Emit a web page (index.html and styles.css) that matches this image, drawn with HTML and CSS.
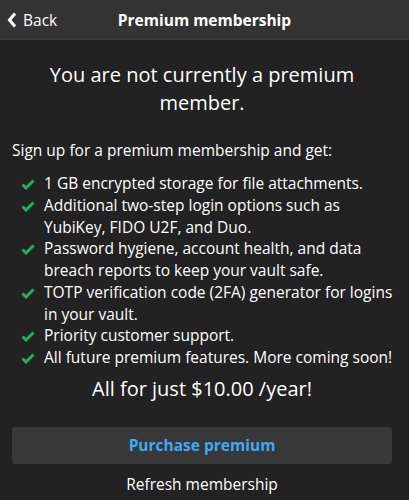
FILE: index.html
```html
<!DOCTYPE html>
<html>
<head>
<meta charset="utf-8">
<link rel="stylesheet" href="styles.css">
</head>
<body>
<header class="topbar">
  <a class="back"><svg class="chev" viewBox="0 0 10 16" width="10" height="16"><path d="M8 1.5 L2.5 8 L8 14.5" fill="none" stroke="#fff" stroke-width="3" stroke-linejoin="miter"/></svg><span>Back</span></a>
  <h1 class="title">Premium membership</h1>
</header>
<main class="content">
  <p class="lead">You are not currently a premium member.</p>
  <p class="intro">Sign up for a premium membership and get:</p>
  <ul class="features">
    <li><svg class="check" viewBox="0 0 14 11" width="14" height="11"><path d="M1.5 5.5 L5 9 L12.5 1.5" fill="none" stroke="#1fae62" stroke-width="3"/></svg><span>1 GB encrypted storage for file attachments.</span></li>
    <li><svg class="check" viewBox="0 0 14 11" width="14" height="11"><path d="M1.5 5.5 L5 9 L12.5 1.5" fill="none" stroke="#1fae62" stroke-width="3"/></svg><span>Additional two-step login options such as YubiKey, FIDO U2F, and Duo.</span></li>
    <li><svg class="check" viewBox="0 0 14 11" width="14" height="11"><path d="M1.5 5.5 L5 9 L12.5 1.5" fill="none" stroke="#1fae62" stroke-width="3"/></svg><span>Password hygiene, account health, and data breach reports to keep your vault safe.</span></li>
    <li><svg class="check" viewBox="0 0 14 11" width="14" height="11"><path d="M1.5 5.5 L5 9 L12.5 1.5" fill="none" stroke="#1fae62" stroke-width="3"/></svg><span>TOTP verification code (2FA) generator for logins in your vault.</span></li>
    <li><svg class="check" viewBox="0 0 14 11" width="14" height="11"><path d="M1.5 5.5 L5 9 L12.5 1.5" fill="none" stroke="#1fae62" stroke-width="3"/></svg><span>Priority customer support.</span></li>
    <li><svg class="check" viewBox="0 0 14 11" width="14" height="11"><path d="M1.5 5.5 L5 9 L12.5 1.5" fill="none" stroke="#1fae62" stroke-width="3"/></svg><span>All future premium features. More coming soon!</span></li>
  </ul>
  <p class="price">All for just $10.00 /year!</p>
  <button class="purchase">Purchase premium</button>
  <button class="refresh">Refresh membership</button>
</main>
</body>
</html>
```
FILE: styles.css
```css
* { box-sizing: border-box; }
html, body { margin: 0; padding: 0; }
body {
  background: #222222;
  color: #ffffff;
  font-family: "Open Sans", "Noto Sans", sans-serif;
  width: 409px;
  height: 500px;
  overflow: hidden;
}
.topbar {
  height: 40px;
  background: #333333;
  border-bottom: 1px solid #3a3a3a;
  display: flex;
  align-items: center;
  position: relative;
}
.back {
  display: flex;
  align-items: center;
  gap: 6px;
  padding-left: 7px;
  font-size: 15.5px;
  color: #fff;
}
.chev { display: block; }
.title {
  position: absolute;
  left: 0;
  right: 0;
  text-align: center;
  margin: 0;
  font-size: 15.5px;
  font-weight: 700;
  pointer-events: none;
}
.content {
  padding: 0 17px 0 12px;
}
.lead {
  margin: 21px 20px 0;
  text-align: center;
  font-size: 20px;
  line-height: 28px;
}
.intro {
  margin: 22px 0 0;
  font-size: 15.5px;
  line-height: 22px;
}
.features {
  list-style: none;
  margin: 12px -12px 0 0;
  padding: 0 0 0 9px;
  font-size: 15.5px;
  line-height: 21.75px;
}
.features li {
  display: flex;
  gap: 9px;
}
.check {
  flex: none;
  margin-top: 6px;
}
.price {
  margin: 6px 0 0;
  text-align: center;
  font-size: 20px;
  line-height: 28px;
}
.purchase {
  display: block;
  width: 100%;
  margin-top: 24px;
  height: 37px;
  background: #383838;
  border: none;
  border-radius: 3px;
  color: #3fa9f5;
  font-family: inherit;
  font-size: 15.5px;
  font-weight: 700;
}
.refresh {
  display: block;
  width: 100%;
  margin-top: 9px;
  background: none;
  border: none;
  color: #fff;
  font-family: inherit;
  font-size: 15.5px;
  line-height: 22px;
  padding: 0;
}
```
